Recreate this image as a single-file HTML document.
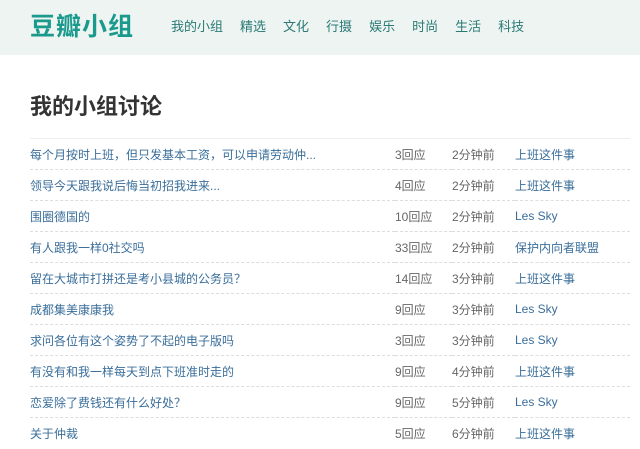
<html><head><style>
body{margin:0;width:640px;height:446px;overflow:hidden;background:#fff;font-family:"Liberation Sans","Noto Sans CJK SC",sans-serif}
.hd{height:55px;background:#eef4f2;position:relative}
.logo{position:absolute;left:30px;top:7px;font-size:25px;font-weight:bold;color:#1a9a8c;letter-spacing:1px}
.nav{position:absolute;left:171px;top:16px;font-size:13px;color:#2b7a75}
.nav span{margin-right:17px}
h1{position:absolute;left:30px;top:89px;margin:0;font-size:22px;color:#333}
table{position:absolute;left:30px;top:138px;width:600px;border-collapse:collapse;font-size:12px;border-top:1px solid #eee}
td{height:31px;border-bottom:1px dashed #ddd;padding:0;color:#666}
td a{color:#3a6e9a}
tr:last-child td{border-bottom:none}
</style></head><body>
<div class="hd"><div class="logo">豆瓣小组</div><div class="nav"><span>我的小组</span><span>精选</span><span>文化</span><span>行摄</span><span>娱乐</span><span>时尚</span><span>生活</span><span>科技</span></div></div>
<h1>我的小组讨论</h1>
<table>
<colgroup><col style="width:365px"><col style="width:57px"><col style="width:63px"><col></colgroup>
<tr><td><a>每个月按时上班，但只发基本工资，可以申请劳动仲...</a></td><td>3回应</td><td>2分钟前</td><td><a>上班这件事</a></td></tr>
<tr><td><a>领导今天跟我说后悔当初招我进来...</a></td><td>4回应</td><td>2分钟前</td><td><a>上班这件事</a></td></tr>
<tr><td><a>围圈德国的</a></td><td>10回应</td><td>2分钟前</td><td><a>Les Sky</a></td></tr>
<tr><td><a>有人跟我一样0社交吗</a></td><td>33回应</td><td>2分钟前</td><td><a>保护内向者联盟</a></td></tr>
<tr><td><a>留在大城市打拼还是考小县城的公务员？</a></td><td>14回应</td><td>3分钟前</td><td><a>上班这件事</a></td></tr>
<tr><td><a>成都集美康康我</a></td><td>9回应</td><td>3分钟前</td><td><a>Les Sky</a></td></tr>
<tr><td><a>求问各位有这个姿势了不起的电子版吗</a></td><td>3回应</td><td>3分钟前</td><td><a>Les Sky</a></td></tr>
<tr><td><a>有没有和我一样每天到点下班准时走的</a></td><td>9回应</td><td>4分钟前</td><td><a>上班这件事</a></td></tr>
<tr><td><a>恋爱除了费钱还有什么好处？</a></td><td>9回应</td><td>5分钟前</td><td><a>Les Sky</a></td></tr>
<tr><td><a>关于仲裁</a></td><td>5回应</td><td>6分钟前</td><td><a>上班这件事</a></td></tr>
</table>
</body></html>
